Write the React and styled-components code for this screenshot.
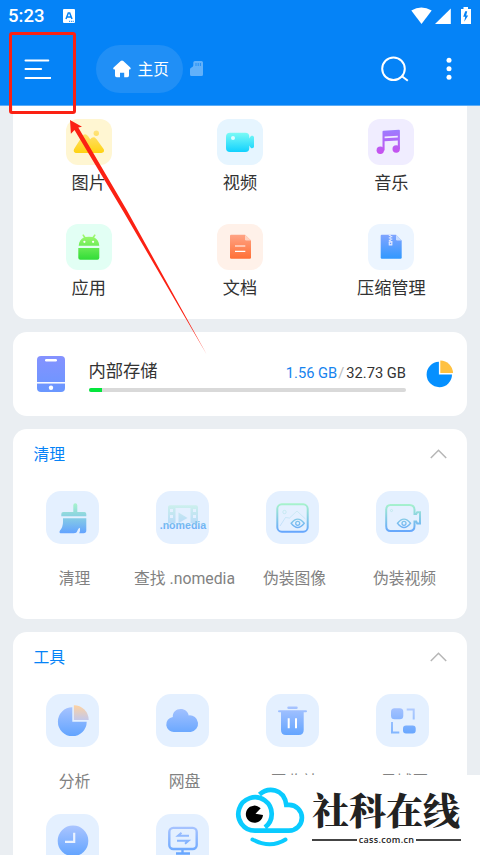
import React from 'react';
import styled, { createGlobalStyle } from 'styled-components';

const GlobalStyle = createGlobalStyle`
  * { box-sizing: border-box; }
  body { margin: 0; background: #eaeef2; overflow: hidden; }
  svg { display: block; flex: none; }
`;

const Page = styled.div`
  position: relative;
  width: 480px;
  height: 855px;
  overflow: hidden;
  background: #eaeef2;
  font-family: Roboto, 'Noto Sans CJK SC', sans-serif;
  color: #333;
`;
const Header = styled.header`
  height: 106px;
  background: #0583f7;
  border-bottom: 1px solid #5cacf6;
  color: #fff;
`;
const StatusBar = styled.div`
  display: flex;
  align-items: center;
  height: 32px;
  padding: 0 9px 0 8px;
`;
const Clock = styled.span`
  font-size: 18.5px;
  font-weight: 500;
  line-height: 34px;
  width: 55px;
`;
const StatusIcons = styled.div`
  margin-left: auto;
`;
const Toolbar = styled.div`
  display: flex;
  align-items: center;
  height: 73px;
  padding: 0 28px 0 23.5px;
`;
const HomeTab = styled.div`
  display: flex;
  align-items: center;
  gap: 7px;
  width: 87px;
  height: 48px;
  margin: 0 7px 0 45px;
  padding-left: 16.5px;
  border-radius: 24px;
  background: #208ff6;
  font-size: 15.7px;
`;
const Actions = styled.div`
  display: flex;
  align-items: center;
  gap: 37px;
  margin-left: auto;
`;
const Cards = styled.main`
  display: flex;
  flex-direction: column;
  gap: 13px;
  padding: 0 13px;
`;
const Card = styled.section`
  flex: none;
  height: ${(p) => p.$h}px;
  background: #fff;
  border-radius: ${(p) => (p.$flatTop ? '0 0 14px 14px' : '14px')};
`;
const CategoryGrid = styled.div`
  display: grid;
  grid-template-columns: repeat(3, 1fr);
  grid-auto-rows: 105px;
  padding-top: 13px;
`;
const Category = styled.div`
  display: flex;
  flex-direction: column;
  align-items: center;
  font-size: 17.2px;
  line-height: 24px;
  gap: 6px;
`;
const Tile = styled.div`
  width: ${(p) => p.$size}px;
  height: ${(p) => p.$size}px;
  border-radius: ${(p) => (p.$size > 50 ? 15 : 12)}px;
  background: ${(p) => p.$bg};
`;
const StorageRow = styled.div`
  display: flex;
  align-items: center;
  height: 100%;
  padding: 0 13px 0 24px;
`;
const StorageInfo = styled.div`
  width: 318px;
  margin: 0 20px 0 23.5px;
`;
const StorageHead = styled.div`
  display: flex;
  align-items: flex-end;
  justify-content: space-between;
  height: 27px;
  margin-bottom: 4px;
  font-size: 17.3px;
  line-height: 25px;
`;
const Usage = styled.span`
  font-size: 14.7px;
  line-height: 22px;
`;
const Used = styled.span`color: #1683ee;`;
const Slash = styled.span`color: #bbb; margin: 0 2px 0 1px;`;
const Track = styled.div`
  height: 4px;
  border-radius: 2px;
  background: #d9d9d9;
  overflow: hidden;
`;
const Fill = styled.div`
  width: 13px;
  height: 100%;
  background: #05e63d;
`;
const CardTitle = styled.div`
  display: flex;
  align-items: center;
  justify-content: space-between;
  height: 49px;
  padding: 0 20px 0 20.5px;
  font-size: 15.8px;
  color: #0583f7;
`;
const ToolGrid = styled.div`
  display: grid;
  grid-template-columns: repeat(4, 110px);
  grid-auto-rows: 120.5px;
  padding: 12.5px 0 0 6.5px;
`;
const Tool = styled.div`
  display: flex;
  flex-direction: column;
  align-items: center;
  gap: 23px;
  font-size: 15.8px;
  line-height: 24px;
  color: #828282;
  white-space: nowrap;

  ${Tile} { margin-right: 4px; }
`;
const Overlay = styled.svg`
  position: absolute;
  left: 0;
  top: 0;
`;
const HighlightBox = styled.div`
  position: absolute;
  left: 8.5px;
  top: 31.5px;
  width: 67px;
  height: 82px;
  border: 3px solid #fb2113;
  border-radius: 3px;
`;
const Watermark = styled.div`
  position: absolute;
  right: 0;
  bottom: 0;
  display: flex;
  width: 248px;
  height: 80px;
  background: #fff;
`;
const Brand = styled.div`
  display: flex;
  flex-direction: column;
  width: 149px;
  margin-left: 4px;
  padding-top: 11px;
  color: #222;
`;
const BrandName = styled.div`
  height: 48px;
  font: 900 37px/46px 'Noto Serif CJK SC', 'Noto Sans CJK SC', serif;
  white-space: nowrap;
`;
const BrandSite = styled.div`
  display: flex;
  align-items: center;
  gap: 2px;
  height: 11px;
  font: 600 9px/11px 'Open Sans', sans-serif;
  letter-spacing: 0.3px;

  &::before, &::after { content: ''; flex: 1; height: 2px; background: #444; }
`;

const gradients = [
  ['mint', 12, 42, '#a9f5cb', '#63a3ff'],
  ['blue', 12, 42, '#a9c4ff', '#62a4ff'],
  ['peach', 11, 30, '#ffd2a0', '#b3c6ff'],
  ['yellow', 10, 35, '#ffe484', '#ffd20d'],
  ['cyan', 13, 34, '#7ffcf5', '#0ccfff'],
  ['violet', 11, 35, '#9c7dff', '#c84fee'],
  ['green', 10, 36, '#a5fa72', '#30dc37'],
  ['orange', 10, 35, '#ffa587', '#ff6f35'],
  ['zip', 10, 35, '#83a5ff', '#3098ff'],
  ['phone', 0, 36, '#8592ff', '#6997ff'],
];
const Gradients = () => (
  <Overlay width="0" height="0">
    <defs>
      {gradients.map(([id, y1, y2, from, to]) => (
        <linearGradient key={id} id={id} gradientUnits="userSpaceOnUse" x1="0" x2="0" y1={y1} y2={y2}>
          <stop stopColor={from} />
          <stop offset="1" stopColor={to} />
        </linearGradient>
      ))}
    </defs>
  </Overlay>
);

const Eye = ({ cx }) => (
  <>
    <path d={`M${cx - 6.5} 32.3q6.5-8.4 13 0q-6.5 8.4-13 0Z`} fill="#e4f0ff" strokeWidth="1.4" />
    <circle cx={cx} cy="32.3" r="2" strokeWidth="1.3" fill="none" />
  </>
);

const categories = [
  { name: '图片', bg: '#fff6d2', icon: <g fill="url(#yellow)"><circle cx="30.3" cy="14.3" r="2.7" /><path d="M8.4 29.5 16 17.6Q18.8 13 22 17l2.2 3.2c2-2.4 4.3-3 6.4.1l6.8 9.5c1.6 2.3.1 4.2-2 4.2H10.800c-2.600 0-4-2-2.400-4.500Z" /></g> },
  { name: '视频', bg: '#e6f5ff', icon: <g fill="url(#cyan)"><rect x="9" y="13.7" width="23.3" height="19.3" rx="4" /><path d="M31 19.5q1.5 0 2.2-1.5c.7-1.7 3.8-1.6 3.8.6v8.8c0 2-3 2.4-3.8.5q-.7-1.6-2.2-1.6Z" /><circle cx="16" cy="19" r="2" fill="#dffcff" /></g> },
  { name: '音乐', bg: '#f0edff', icon: <g fill="url(#violet)"><circle cx="12.3" cy="31.3" r="3.7" /><circle cx="28.2" cy="30" r="3.7" /><path fillRule="evenodd" d="M14.5 31.5V12.8q0-1 1-1.1L31 10.8q.9 0 .9.9V30h-2.1v-8.6l-13.2.9v9.2ZM16.6 17.5v1.7l13.2-.8v-1.7Z" /></g> },
  { name: '应用', bg: '#e2fff4', icon: <g fill="url(#green)"><path d="M12.7 21.8c.3-4.4 2.3-7.2 5.1-8.3l-1.6-2.4 1.3-.8 2 2.8q3.5-.7 7 0l2-2.8 1.3.8-1.6 2.4c2.8 1.1 4.8 3.9 5.1 8.3Z" /><path d="M12.3 24h21v9.7q0 2-2 2h-17q-2 0-2-2Z" /><circle cx="18.4" cy="17.8" r="1.1" fill="#fff" /><circle cx="27.1" cy="17.8" r="1.1" fill="#fff" /></g> },
  { name: '文档', bg: '#fff1e9', icon: <g><path fill="url(#orange)" d="M14 10.7h14l6 5.8v17q0 1.2-1.2 1.2H14.2q-1.2 0-1.2-1.2V11.8q0-1.1 1-1.1Z" /><path d="M28 10.7v4.5q0 1.3 1.3 1.3H34Z" fill="#ffd2c0" /><path d="M18 22h10.3M18 27.4h10.3" stroke="#fff" strokeWidth="1.2" /></g> },
  { name: '压缩管理', bg: '#ecf5ff', icon: <g><path fill="url(#zip)" d="M13.7 10.7H28l5.7 5.8v17q0 1.2-1.2 1.2H13.9q-1.2 0-1.2-1.2V11.8q0-1.1 1-1.1Z" /><path d="M28 10.7v4.5q0 1.3 1.3 1.3h4.4Z" fill="#c8dcff" /><path d="M21.8 10.7v8M23.3 12v7" stroke="#e1e8ff" strokeWidth="2" strokeDasharray="1.3 1.2" /><rect x="20.7" y="17.2" width="3.7" height="4.4" rx=".5" fill="#e1e8ff" /><rect x="21.9" y="18.7" width="1.3" height="1.4" fill="#719fff" /></g> },
];

const cleaners = [
  { name: '清理', icon: <g fill="url(#mint)"><path d="M27.3 21v-6.8q0-2 2-2t2 2V21h7q2 0 2 2v2.3h-25V23q0-2 2-2Z" /><path d="M17 27.2h23.3v12.3q0 2.800-2.800 2.800h-4.300q1.200-2.800.8-5.600-2 .6-2.600 3.100-.6 2.500-3.800 2.500H14.600q-1.900-.6-.6-2.800Q17 36 17 31Z" /></g> },
  { name: '查找 .nomedia', icon: <g><g opacity=".38" fill="url(#mint)"><path fillRule="evenodd" d="M14 14.2h26q2 0 2 2V32H12V16.200q0-2 2-2ZM19.500 17v15h15V17ZM14 18v3h3v-3Zm0 6v3h3v-3Zm23-6v3h3v-3Zm0 6v3h3v-3Z" /><path d="m22.500 21.500 9 5.500-9 5Z" /></g><text x="3.700" y="37.500" fill="url(#mint)" fontFamily="Liberation Sans" fontWeight="700" fontSize="10.600">.nomedia</text></g> },
  { name: '伪装图像', icon: <g fill="none" stroke="url(#mint)"><rect x="11.3" y="13.3" width="30.4" height="27.4" rx="4.5" strokeWidth="2" /><path d="m14 35 5.5-8.5 4 .5 7.5-7 8.5 8" opacity=".3" /><circle cx="18.5" cy="21" r="1.7" opacity=".35" /><Eye cx={31.7} /></g> },
  { name: '伪装视频', icon: <g fill="none" stroke="url(#mint)"><path strokeWidth="2" d="M14.5 14h19q5 0 5 5v4h1.7l1-1.8H44v11.2h-2.8l-1-2h-1.7V35q0 5-5 5h-19q-4.3 0-4.3-5V19q0-5 4.3-5Z" /><circle cx="15.5" cy="19.5" r="1.1" opacity=".4" /><Eye cx={28} /></g> },
];

const tools = [
  { name: '分析', icon: <g><path fill="url(#blue)" d="M26.3 13.3A14.4 14.4 0 1 0 40.7 27.7H26.3Z" /><path fill="url(#peach)" d="M27.9 11.2A14.9 14.9 0 0 1 42.7 26H27.9Z" /></g> },
  { name: '网盘', icon: <path fill="url(#blue)" d="M18.500 38a7.600 7.600 0 0 1-1.700-15.100C16.500 18.200 20.100 15 24.700 15c4.100 0 7.300 2.500 8 6.400A8.300 8.300 0 1 1 34.700 38Z" /> },
  { name: '回收站', icon: <g fill="url(#blue)"><rect x="21.3" y="12.5" width="10.4" height="2.5" rx="1.2" /><path d="M13 16.3h27q1 0 1 1t-1 1h-2.3V36q0 5-5 5H20q-5 0-5-5V18.3h-2q-1 0-1-1t1-1Z" /><path d="M22.7 24.3v10M30 24.3v10" stroke="#fff" strokeWidth="2" /></g> },
  { name: '局域网', icon: <g><g fill="url(#blue)"><rect x="15" y="14.3" width="12.3" height="11" rx="3.5" /><rect x="27" y="31.5" width="12.7" height="8" rx="3" /></g><path d="M30.7 15.4h7v10M16 28v10.4h7.3" fill="none" stroke="url(#blue)" strokeWidth="2" opacity=".8" /></g> },
  { name: '', icon: <g><circle cx="27" cy="26.9" r="15.3" fill="url(#blue)" /><path d="M19 27.8h9.2v-9" fill="none" stroke="#eaf2ff" strokeWidth="2.2" /></g> },
  { name: '', icon: <g fill="none" stroke="url(#blue)" strokeWidth="2.4"><rect x="13.3" y="13.9" width="27.400" height="21.100" rx="4" /><path d="M26.500 35v5M20 39.500h14" /><path strokeWidth="2" d="M33 21.800H22l3.500-3M21 26.700h11.500l-3.500 3" /></g> },
];

const Chevron = () => (
  <svg width="17" height="10" viewBox="0 0 17 10"><path d="m.8 9 7.7-7.8L16.2 9" fill="none" stroke="#b6b6b6" strokeWidth="1.5" /></svg>
);

const ToolSection = ({ title, items, height }) => (
  <Card $h={height}>
    <CardTitle>{title}<Chevron /></CardTitle>
    <ToolGrid>
      {items.map((t, i) => (
        <Tool key={i}>
          <Tile $size={53.5} $bg="#e4f0ff"><svg width="53.5" height="53.5">{t.icon}</svg></Tile>
          {t.name}
        </Tool>
      ))}
    </ToolGrid>
  </Card>
);

export default function App() {
  return (
    <Page>
      <GlobalStyle />
      <Gradients />
      <Header>
        <StatusBar>
          <Clock>5:23</Clock>
          <svg width="12" height="14"><rect width="12" height="14" rx="1" fill="#fff" /><path d="m3 10 2.3-6h1.4L9 10M4 8h4" fill="none" stroke="#0583f7" strokeWidth="1.5" /><path d="M6 12.3h1.2m.8 0h1.2m.6 0h1" stroke="#0583f7" /></svg>
          <StatusIcons>
            <svg width="60" height="18" fill="#fff">
              <path d="M.3 3.5Q10.3-2.5 20.7 3.5L10.5 17Z" />
              <path d="M24 17 39.8 1.5V17Z" />
              <path d="M52.500 0h4.500v2H60v15H50V2h2.500Z" />
              <path d="m54.200 4.200-2 5.600h2l-1 5 4-6.300h-2l1-4.300Z" fill="#0583f7" />
            </svg>
          </StatusIcons>
        </StatusBar>
        <Toolbar>
          <svg width="27.500" height="20"><path d="M1.500 1.500h22.800M1.500 10h15.600M1.500 18.900h25" stroke="#fff" strokeWidth="2" strokeLinecap="round" /></svg>
          <HomeTab>
            <svg width="18" height="18"><path d="M7.700 1q1.300-1.200 2.600 0l7 6.600q1.100 1.900-.7 2H16v6q0 1.600-1.600 1.600h-3.200v-4.500H7v4.500H3.700Q2 17.200 2 15.600v-6h-.7q-1.800-.1-.7-2Z" fill="#fff" /></svg>
            主页
          </HomeTab>
          <svg width="13" height="15"><path d="M5 0h6.500q1.500 0 1.500 1.500v12q0 1.500-1.500 1.500h-10Q0 15 0 13.500V8.500Q0 7 1.500 6.500T3.300 4.500V1.500Q3.300 0 5 0Z" fill="#62b1fa" /><path d="M6 2v3m2.200-3v3m2.200-3v3" stroke="#208ff6" /></svg>
          <Actions>
            <svg width="28" height="26" fill="none" stroke="#fff" strokeWidth="2"><circle cx="12.500" cy="12.700" r="11.300" /><path d="m20.600 20 6.200 4.800" /></svg>
            <svg width="6" height="24" fill="#fff"><circle cx="3" cy="3.300" r="2.500" /><circle cx="3" cy="11.800" r="2.500" /><circle cx="3" cy="20.300" r="2.500" /></svg>
          </Actions>
        </Toolbar>
      </Header>
      <Cards>
        <Card $h={213} $flatTop>
          <CategoryGrid>
            {categories.map((c) => (
              <Category key={c.name}>
                <Tile $size={46} $bg={c.bg}><svg width="46" height="46">{c.icon}</svg></Tile>
                {c.name}
              </Category>
            ))}
          </CategoryGrid>
        </Card>
        <Card $h={84}>
          <StorageRow>
            <svg width="28" height="36"><rect width="28" height="36" rx="4" fill="url(#phone)" /><path d="M0 26.800h28" stroke="#fff" strokeWidth="1.500" /><rect x="8" y="3" width="12" height="2.500" rx="1.200" fill="#fff" /><circle cx="14" cy="31.800" r="2.200" fill="#fff" /></svg>
            <StorageInfo>
              <StorageHead>
                内部存储
                <Usage><Used>1.56 GB</Used><Slash>/</Slash>32.73 GB</Usage>
              </StorageHead>
              <Track><Fill /></Track>
            </StorageInfo>
            <svg width="28" height="28"><path d="M12.900 1.800A12.700 12.700 0 1 0 26 14.500H12.900Z" fill="#0590ff" /><path d="M14.300.5A12.700 12.700 0 0 1 27 13H14.300Z" fill="#ffc140" /></svg>
          </StorageRow>
        </Card>
        <ToolSection title="清理" items={cleaners} height={190} />
        <ToolSection title="工具" items={tools} height={310} />
      </Cards>
      <HighlightBox />
      <Overlay width="220" height="370"><path d="M70 120 82 126.800l-3.700.8L127 210.500 207 355 124.500 213.500 74.500 130l-3.600 3.800Z" fill="#fb2113" /></Overlay>
      <Watermark>
        <svg width="76" height="80" fill="none" stroke="#0acbff" strokeWidth="4.700">
          <path d="M33 52.400A16.700 16.700 0 1 0 23 55.700H57a12.900 12.900 0 0 0 0-25.800H54.300C52 13 36 12 27.500 19.500" />
          <path d="M20.500 64.500q18 9.500 33 0" strokeLinecap="round" strokeWidth="4" />
          <path d="M23.500 38.800 28.700 33.300A8.600 8.600 0 1 0 31 40Z" fill="#000" stroke="none" />
        </svg>
        <Brand>
          <BrandName>社科在线</BrandName>
          <BrandSite>cass.com.cn</BrandSite>
        </Brand>
      </Watermark>
    </Page>
  );
}
